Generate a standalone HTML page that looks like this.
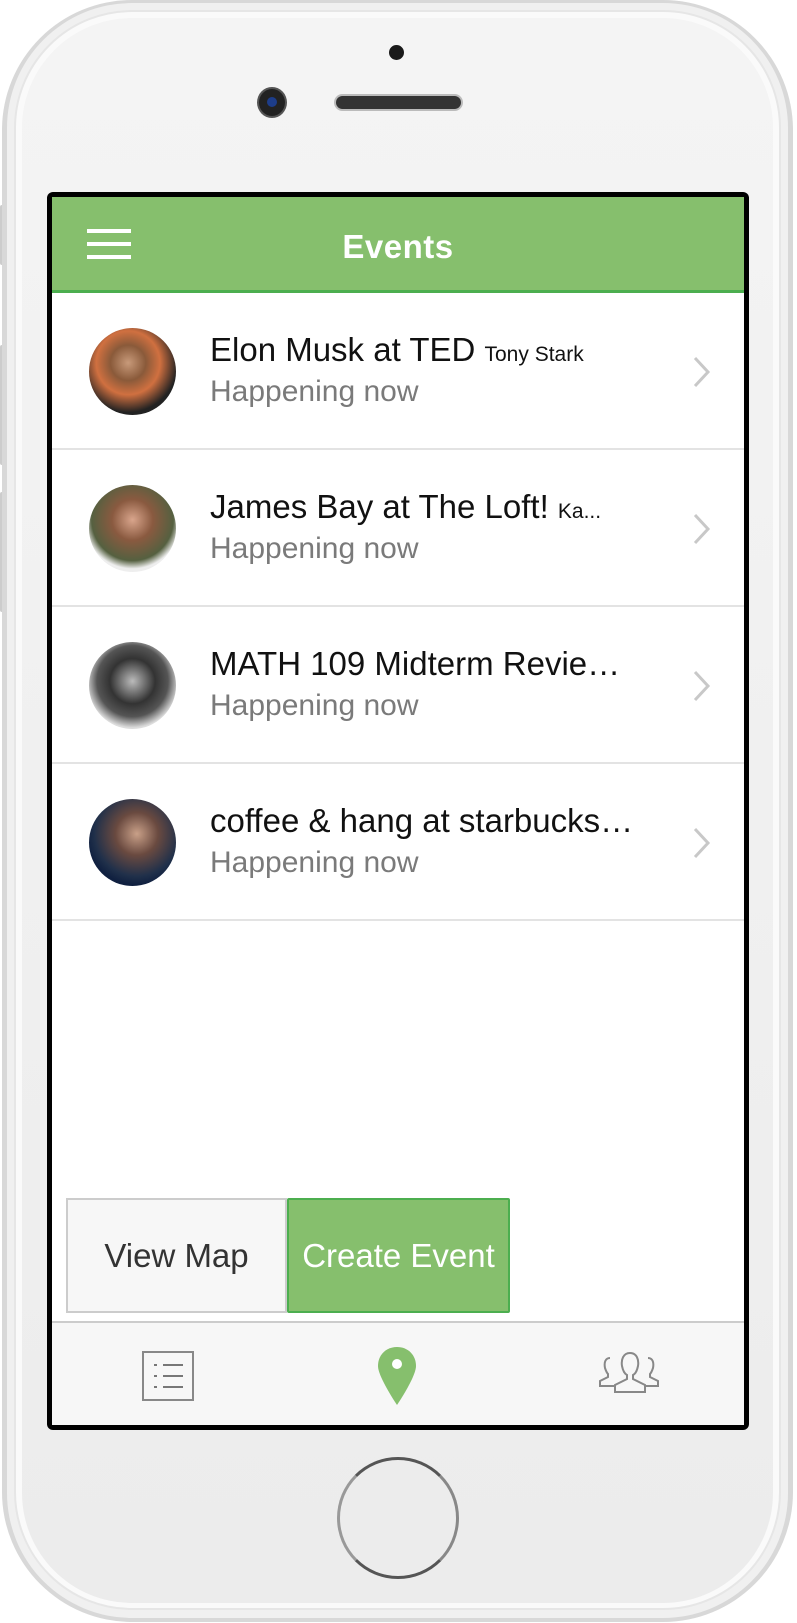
<!DOCTYPE html>
<html><head><meta charset="utf-8"><style>
*{margin:0;padding:0;box-sizing:border-box}
body{width:797px;height:1623px;background:#fff;position:relative;overflow:hidden;font-family:"Liberation Sans",Arial,sans-serif}
.body{position:absolute;left:2px;top:0;width:791px;height:1622px;border-radius:130px;background:#d8d8d8;}
.body2{position:absolute;left:7px;top:3px;width:781px;height:1615px;border-radius:125px;background:#f0f0f0;}
.body3{position:absolute;left:14px;top:10px;width:767px;height:1600px;border-radius:118px;background:#fafafa;border:2px solid #e6e6e6}
.face{position:absolute;left:22px;top:18px;width:751px;height:1585px;border-radius:110px;background:linear-gradient(#f4f4f4,#ececec)}
.btn{position:absolute;left:0;width:6px;background:#ccc;border-radius:2px}
.screen{position:absolute;left:47px;top:192px;width:702px;height:1238px;background:#000;border-radius:6px}
.inner{position:absolute;left:5px;top:5px;width:692px;height:1228px;background:#fff;overflow:hidden}
.hdr{height:96px;background:#86bf6d;border-bottom:3px solid #4cae4f;position:relative}
.hdr h1{position:absolute;left:0;right:0;top:31px;text-align:center;color:#fff;font-size:33px;font-weight:bold;letter-spacing:0.5px}
.hb{position:absolute;left:35px;width:44px;height:4px;background:#fff}
.row{height:157px;border-bottom:2px solid #e3e3e3;position:relative}
.av{position:absolute;left:37px;top:35px;width:87px;height:87px;border-radius:50%}
.t{position:absolute;left:158px;top:38px;width:432px;white-space:nowrap;overflow:hidden;text-overflow:ellipsis;font-size:33px;color:#111}
.t small{font-size:21px}
.s{position:absolute;left:158px;top:82px;font-size:30px;color:#7a7a7a}
.ch{position:absolute;left:640px;top:62px}
.b1{position:absolute;left:14px;top:1001px;width:221px;height:115px;background:#f7f7f7;border:2px solid #ccc;font-size:33px;color:#333;text-align:center;line-height:111px}
.b2{position:absolute;left:235px;top:1001px;width:223px;height:115px;background:#86bf6d;border:2px solid #4cae4f;font-size:33px;color:#fff;text-align:center;line-height:111px;border-radius:2px}
.tab{position:absolute;left:0;top:1124px;width:692px;height:104px;background:#f7f7f7;border-top:2px solid #ccc}
.home{position:absolute;left:337px;top:1457px;width:122px;height:122px;border-radius:50%;border:3px solid #555;border-left-color:#999;border-right-color:#888;background:#ececec}
</style></head><body>
<div class="btn" style="top:205px;height:60px"></div>
<div class="btn" style="top:345px;height:120px"></div>
<div class="btn" style="top:492px;height:120px"></div>
<div class="body"></div><div class="body2"></div><div class="body3"></div><div class="face"></div>
<div style="position:absolute;left:389px;top:45px;width:15px;height:15px;border-radius:50%;background:#1a1a1a"></div>
<div style="position:absolute;left:259px;top:89px;width:26px;height:27px;border-radius:50%;background:#222;box-shadow:0 0 0 2px #555"><div style="position:absolute;left:8px;top:8px;width:10px;height:10px;border-radius:50%;background:#1d3d8a"></div></div>
<div style="position:absolute;left:336px;top:96px;width:125px;height:13px;border-radius:7px;background:#333;box-shadow:0 0 0 2px #bbb"></div>
<div class="screen"><div class="inner">
<div class="hdr"><div class="hb" style="top:32px"></div><div class="hb" style="top:45px"></div><div class="hb" style="top:58px"></div><h1>Events</h1></div>
<div class="row"><div class="av" style="background:radial-gradient(circle at 45% 40%,#c89a7a 0,#8a5a3a 25%,#d07040 45%,#222 70%)"></div><div class="t">Elon Musk at TED <small>Tony Stark</small></div><div class="s">Happening now</div><svg class="ch" width="20" height="34"><path d="M3 3L16 17L3 31" fill="none" stroke="#c8c8c8" stroke-width="3"/></svg></div>
<div class="row"><div class="av" style="background:radial-gradient(circle at 50% 40%,#d9a58c 0,#8a5a40 30%,#556040 60%,#eee 72%)"></div><div class="t">James Bay at The Loft! <small>Ka...</small></div><div class="s">Happening now</div><svg class="ch" width="20" height="34"><path d="M3 3L16 17L3 31" fill="none" stroke="#c8c8c8" stroke-width="3"/></svg></div>
<div class="row"><div class="av" style="background:radial-gradient(circle at 50% 45%,#bbb 0,#333 35%,#555 55%,#ddd 72%)"></div><div class="t">MATH 109 Midterm Review Session</div><div class="s">Happening now</div><svg class="ch" width="20" height="34"><path d="M3 3L16 17L3 31" fill="none" stroke="#c8c8c8" stroke-width="3"/></svg></div>
<div class="row"><div class="av" style="background:radial-gradient(circle at 55% 40%,#c9a088 0,#6a4a40 30%,#20304a 60%,#102040 72%)"></div><div class="t">coffee &amp; hang at starbucks today</div><div class="s">Happening now</div><svg class="ch" width="20" height="34"><path d="M3 3L16 17L3 31" fill="none" stroke="#c8c8c8" stroke-width="3"/></svg></div>
<div class="b1">View Map</div><div class="b2">Create Event</div>
<div class="tab">
<svg style="position:absolute;left:89px;top:27px" width="54" height="52"><rect x="2" y="2" width="50" height="48" fill="none" stroke="#888" stroke-width="2"/><g stroke="#777" stroke-width="2"><path d="M13 15h3M22 15h20M13 26h3M22 26h20M13 37h3M22 37h20"/></g></svg>
<svg style="position:absolute;left:324px;top:22px" width="42" height="62"><path d="M21 2C10 2 2 10 2 21C2 32 21 60 21 60C21 60 40 32 40 21C40 10 32 2 21 2Z" fill="#86bf6d"/><circle cx="21" cy="19" r="5" fill="#fff"/></svg>
<svg style="position:absolute;left:546px;top:27px" width="64" height="48"><g fill="none" stroke="#888" stroke-width="2"><path d="M12 8c-5 0-6 5-5 10c1 3 2 5 3 6v3l-8 4v5h14M50 8c5 0 6 5 5 10c-1 3-2 5-3 6v3l8 4v5h-14"/><path d="M32 3c-7 0-9 7-8 13c1 5 3 8 5 9v4l-12 6v7h30v-7l-12-6v-4c2-1 4-4 5-9c1-6-1-13-8-13z" fill="#f7f7f7"/></g></svg>
</div>
</div></div>
<div class="home"></div>
</body></html>
